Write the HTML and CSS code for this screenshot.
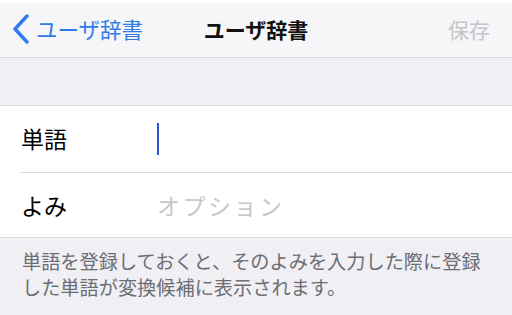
FILE: index.html
```html
<!DOCTYPE html>
<html lang="ja">
<head>
  <meta charset="UTF-8" />
  <title>ユーザ辞書</title>
  <link rel="stylesheet" href="styles.css">
</head>
<body>

  <div id="navBar">
    <div class="nav-back">
      <svg class="chevron" width="18" height="30" viewBox="0 0 18 30">
        <polyline points="15,2 3,15 15,28" fill="none" stroke="#2f7bf2" stroke-width="3.4" stroke-linecap="round" stroke-linejoin="round" />
      </svg>
      <span>ユーザ辞書</span>
    </div>
    <div class="nav-title">ユーザ辞書</div>
    <div class="nav-save">保存</div>
  </div>

  <div class="spacer"></div>

  <div class="form-list">
    <div class="form-row">
      <div class="label">単語</div>
      <div class="value"><span class="cursor"></span></div>
    </div>
    <div class="form-row">
      <div class="label">よみ</div>
      <div class="value placeholder">オプション</div>
    </div>
  </div>

  <div class="footer-note">
    単語を登録しておくと、そのよみを入力した際に登録した単語が変換候補に表示されます。
  </div>

</body>
</html>
```

FILE: styles.css
```css
* { margin: 0; padding: 0; box-sizing: border-box; }
html, body {
  height: 100%;
  font-family: "Noto Sans CJK JP", "Noto Sans", sans-serif;
  background: #efeff4;
  color: #000;
  overflow: hidden;
}

#navBar {
  position: relative;
  display: flex;
  align-items: center;
  justify-content: space-between;
  height: 58px;
  padding: 0 22px 3px 12px;
  border-top: 3px solid #ffffff;
  border-bottom: 1px solid #d6d6da;
  background: #f6f6f8;
}

.nav-back {
  display: flex;
  align-items: center;
  gap: 6px;
  color: #2f7ae6;
  font-size: 21.5px;
}

.chevron { display: block; margin-top: 1px; }

.nav-title {
  position: absolute;
  top: 0;
  bottom: 3px;
  left: 0;
  right: 0;
  display: flex;
  align-items: center;
  justify-content: center;
  font-size: 21px;
  font-weight: bold;
  color: #111;
  pointer-events: none;
}

.nav-save {
  color: #c4c4c9;
  font-size: 21px;
}

.spacer { height: 47px; }

.form-list {
  background: #ffffff;
  border-top: 1px solid #dcdce0;
  border-bottom: 1px solid #dcdce0;
  padding-left: 20px;
}

.form-row {
  display: flex;
  align-items: center;
  height: 66px;
  padding-bottom: 3px;
  font-size: 23px;
}

.form-row + .form-row {
  height: 65px;
  padding-bottom: 0;
  border-top: 1px solid #dcdce0;
}

.label {
  width: 137px;
  padding-left: 1px;
}

.value { flex: 1; display: flex; align-items: center; }

.cursor {
  display: block;
  width: 2px;
  height: 32px;
  margin-top: 3px;
  background: #2b4fd6;
}

.placeholder {
  color: #c7c7cd;
  letter-spacing: 2.5px;
}

.footer-note {
  padding: 10px 22px 0 22px;
  font-size: 19.2px;
  line-height: 26px;
  color: #6d6d72;
}
```
